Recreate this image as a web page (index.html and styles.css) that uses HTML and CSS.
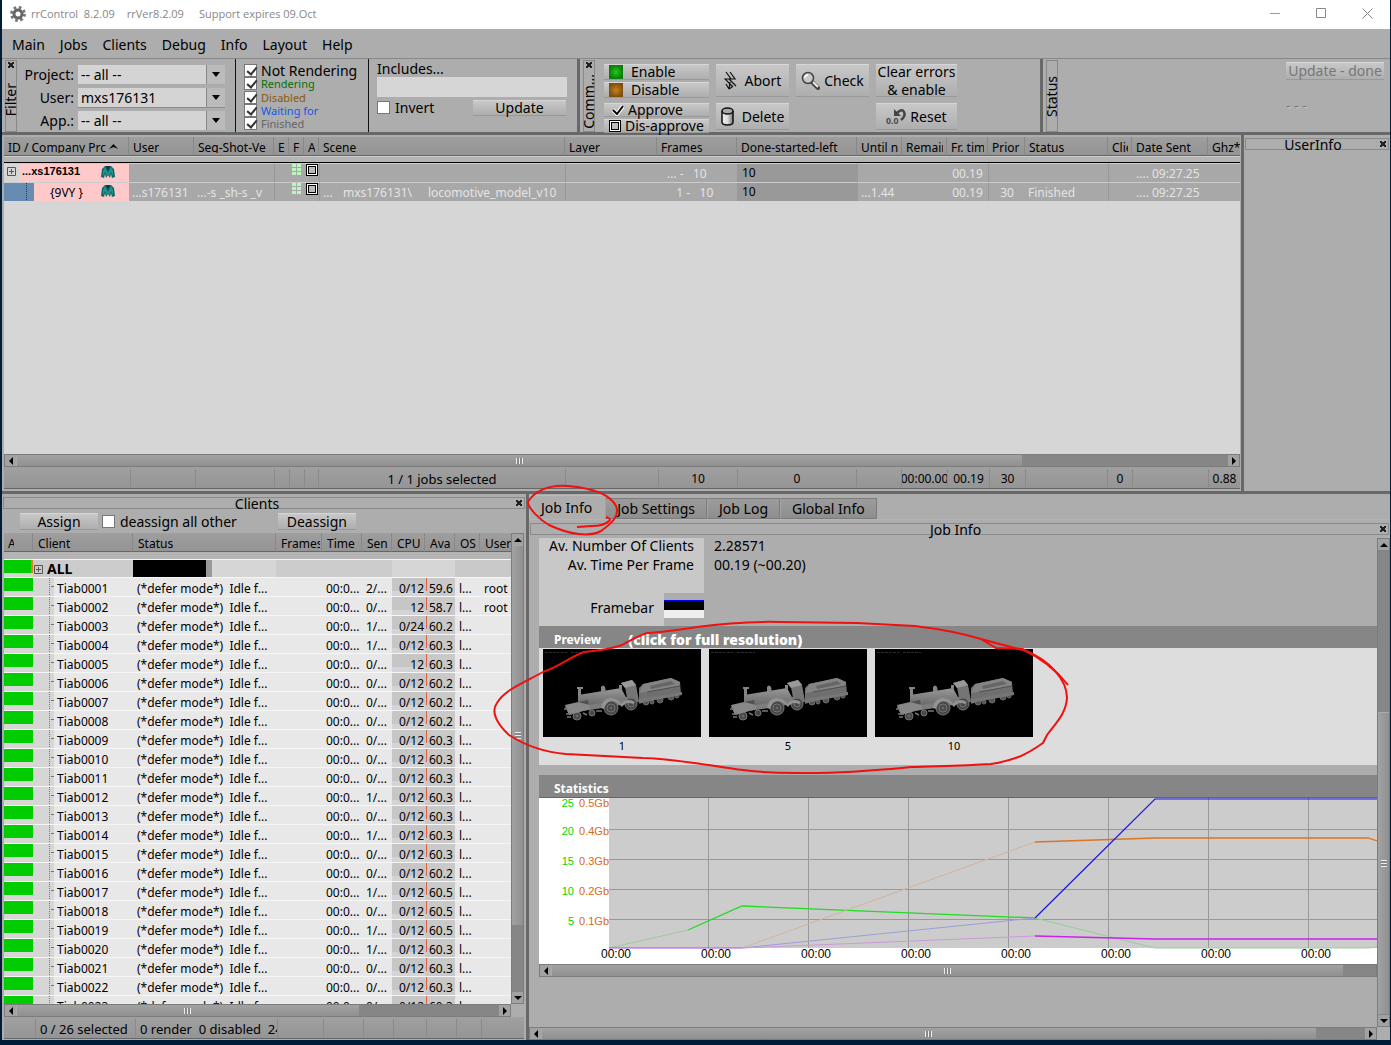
FILE: index.html
```html
<!DOCTYPE html>
<html lang="en">
<head>
<meta charset="utf-8">
<title>rrControl 8.2.09</title>
<link rel="stylesheet" href="styles.css">
</head>
<body>
<svg class="defs" aria-hidden="true">
  <defs>
    <radialGradient id="led-g"><stop offset="0" stop-color="#22cc11"/><stop offset="1" stop-color="#0c7a0c"/></radialGradient>
    <radialGradient id="led-o"><stop offset="0" stop-color="#c88018"/><stop offset="1" stop-color="#7d5010"/></radialGradient>
    <linearGradient id="metal" x1="0" y1="0" x2="0" y2="1"><stop offset="0" stop-color="#999"/><stop offset="1" stop-color="#6a6a6a"/></linearGradient>
    <linearGradient id="can"><stop offset="0" stop-color="#eee"/><stop offset=".5" stop-color="#ddd"/><stop offset="1" stop-color="#777"/></linearGradient>
    <symbol id="maya" viewBox="0 0 14 12">
      <path d="M4 0H10L13 3L14 11L11 12L10 8L9 12L7 9L5 12L4 8L3 12L0 11L1 3Z" fill="#0e6868"/>
      <path d="M4 1L7 7L10 1L12 5L12 10L10 6L8 10L7 8L6 10L4 6L2 10L2 5Z" fill="#23918f"/>
      <path d="M5 0H9L7 5Z" fill="#063c40"/>
    </symbol>
    <symbol id="cells" viewBox="0 0 9 11">
      <path d="M0 0h4v3H0zM5 0h4v3H5zM0 4h4v3H0zM5 4h4v3H5zM0 8h4v3H0zM5 8h4v3H5z" fill="#bdf5bd"/>
    </symbol>
    <symbol id="box" viewBox="0 0 12 12">
      <rect width="12" height="12" fill="#000"/><rect x="1" y="1" width="10" height="10" fill="#fff"/>
      <rect x="2" y="2" width="8" height="8" fill="#000"/><rect x="3" y="3" width="6" height="6" fill="#bbb"/>
    </symbol>
    <symbol id="plus" viewBox="0 0 9 9">
      <path d="M.5 .5h8v8h-8zM2 4.500h5M4.500 2v5" fill="none" stroke="#555"/>
    </symbol>
    <symbol id="loco" viewBox="0 0 158 88">
      <rect width="158" height="88" fill="#000"/>
      <path d="M2 3.500h14M18 3.500h6M28 3.500h18" stroke="#2c2c2c" stroke-dasharray="3 1"/>
      <g fill="#555" stroke="#6c6c6c"><circle cx="103" cy="53" r="3"/><circle cx="109" cy="53" r="2"/><circle cx="117" cy="51" r="3"/><circle cx="128" cy="48" r="3"/><circle cx="134" cy="47" r="2"/></g>
      <path d="M96 39L100 35L128 29L137 33L138 45L96 52Z" fill="#6f6f6f"/>
      <path d="M100 35L128 29L137 33L136 37L103 43L96 44Z" fill="#848484"/>
      <path d="M107 37L128 32L132 35L108 40Z" fill="#666"/>
      <path d="M96 50L139 43L139 46L96 54Z" fill="#777"/>
      <path d="M104 43L137 37" stroke="#505050"/>
      <path d="M22 58L36 54L92 47L96 53L60 59L40 62L26 65Z" fill="#7c7c7c"/>
      <path d="M35 46L60 42L78 39L84 50L46 56L35 53Z" fill="url(#metal)"/>
      <path d="M36 53L45 51L46 57L36 58Z" fill="#505050"/>
      <path d="M34 38h6v2h-2v7h-3v-7h-1zM58 38q2-3 4 0l1 5h-5zM76 36h3v5h-3z" fill="#868686"/>
      <path d="M78 34L89 31L93 36L96 52L85 54L82 38Z" fill="#757575"/>
      <path d="M78 34L89 31L93 36L82 39Z" fill="#999"/>
      <g fill="#484848" stroke="#747474"><circle cx="34" cy="67" r="4"/><circle cx="34" cy="67" r="1"/><circle cx="49" cy="64" r="3"/><circle cx="68" cy="59" r="7"/><circle cx="68" cy="59" r="4"/><circle cx="68" cy="59" r="1"/><circle cx="88" cy="55" r="6"/><circle cx="88" cy="55" r="3"/></g>
      <path d="M58 59q1-9 9-10q8 0 11 6q6-7 14-2l-2 2q-7-3-11 3q-6-7-11-6t-7 8z" fill="#939393"/>
      <path d="M22 56L35 53L47 56L47 60L26 66Z" fill="#888"/>
      <path d="M21 60h4M23 65h6M24 68h4M40 64l4 2M53 62l6 0M96 54l4-1" stroke="#777" stroke-width="1.500"/>
    </symbol>
  </defs>
</svg>

<div class="window">
  <header class="titlebar">
    <svg class="gear" width="16" height="16" viewBox="0 0 16 16"><circle cx="8" cy="8" r="6.500" fill="none" stroke="#777" stroke-width="3" stroke-dasharray="2.600 2.500"/><circle cx="8" cy="8" r="4" fill="#fff" stroke="#666" stroke-width="3"/></svg>
    <span>rrControl&nbsp; 8.2.09</span><span>rrVer8.2.09</span><span class="expires">Support expires 09.Oct</span>
    <div class="winbtns">
      <button aria-label="Minimize"><svg width="11" height="11"><path d="M0 5.500h10" stroke="#999"/></svg></button>
      <button aria-label="Maximize"><svg width="11" height="11"><path d="M.5 .5h9v9h-9z" stroke="#888" fill="none"/></svg></button>
      <button aria-label="Close"><svg width="11" height="11"><path d="M.5 .5l10 10M10.500 .5l-10 10" stroke="#888"/></svg></button>
    </div>
  </header>
  <nav class="menubar">
    <a href="#">Main</a><a href="#">Jobs</a><a href="#">Clients</a><a href="#">Debug</a><a href="#">Info</a><a href="#">Layout</a><a href="#">Help</a>
  </nav>

  <div class="toolbar">
    <section class="tool filter">
      <div class="vtitle"><button class="x" aria-label="Close Filter"></button><span>Filter</span></div>
      <div class="selects">
        <label for="project">Project:</label><span class="sel"><select id="project"><option>-- all --</option></select></span>
        <label for="user">User:</label><span class="sel hot"><select id="user"><option>mxs176131</option></select></span>
        <label for="app">App.:</label><span class="sel"><select id="app"><option>-- all --</option></select></span>
      </div>
    </section>
    <section class="tool states">
      <label class="first"><input type="checkbox" checked><span>Not Rendering</span></label>
      <label class="s-run"><input type="checkbox" checked><span>Rendering</span></label>
      <label class="s-dis"><input type="checkbox" checked><span>Disabled</span></label>
      <label class="s-wait"><input type="checkbox" checked><span>Waiting for</span></label>
      <label class="s-fin"><input type="checkbox" checked><span>Finished</span></label>
    </section>
    <section class="tool includes">
      <label for="inc">Includes...</label>
      <input id="inc" type="text">
      <div class="incrow"><label><input type="checkbox"><span>Invert</span></label><button class="btn">Update</button></div>
    </section>
    <section class="tool commands">
      <div class="vtitle"><button class="x" aria-label="Close Commands"></button><span>Comm...</span></div>
      <div class="cmd-left">
        <button class="btn"><svg width="14" height="14"><rect width="14" height="14" fill="url(#led-g)"/></svg><span>Enable</span></button>
        <button class="btn"><svg width="14" height="14"><rect width="14" height="14" fill="url(#led-o)"/></svg><span>Disable</span></button>
        <button class="btn low ok"><svg width="12" height="12"><path d="M1 6l4 4 6-8" fill="none" stroke="#fff" stroke-width="4"/><path d="M1 6l4 4 6-8" fill="none" stroke="#000" stroke-width="2"/></svg><span>Approve</span></button>
        <button class="btn low last"><svg width="12" height="12"><use href="#box"/></svg><span>Dis-approve</span></button>
      </div>
      <div class="cmd-grid">
        <button class="btn"><svg width="13" height="19" viewBox="0 0 13 19"><path d="M2 1l5 7H1l8 8M6 1l5 7H5l7 7M5 18l1-7M5 18l-3-5M5 18l3-2" fill="none" stroke="#111" stroke-width="1.200"/></svg><span>Abort</span></button>
        <button class="btn tight"><svg width="19" height="19" viewBox="0 0 19 19"><path d="M11 11l6 6" stroke="#444" stroke-width="4" stroke-linecap="round"/><path d="M12 11l5 5" stroke="#eee" stroke-width="2"/><circle cx="7" cy="7" r="5.500" fill="#c8c8c8" stroke="#444" stroke-width="1.500"/><path d="M4 7q0-3 3-3" stroke="#fff" stroke-width="1.500" fill="none"/></svg><span>Check</span></button>
        <button class="btn two">Clear errors<br>&amp; enable</button>
        <button class="btn"><svg width="13" height="19" viewBox="0 0 13 19"><path d="M1 4v11q0 3 5.500 3t5.500-3V4" fill="url(#can)" stroke="#111" stroke-width="1.500"/><ellipse cx="6.500" cy="4" rx="5.500" ry="3" fill="#aaa" stroke="#111" stroke-width="1.500"/></svg><span>Delete</span></button>
        <span></span>
        <button class="btn tight"><svg width="20" height="17" viewBox="0 0 20 17"><path d="M11 5q5-5 7-1t-3 8" fill="none" stroke="#444" stroke-width="2.500"/><path d="M8 1v7h7z" fill="#444"/><text x="0" y="16" class="zero">0.0</text></svg><span>Reset</span></button>
      </div>
    </section>
    <section class="tool status">
      <div class="vtitle nox"><span>Status</span></div>
      <div class="statusbox"><button class="btn" disabled>Update - done</button><span>- - -</span></div>
    </section>
  </div>

  <div class="upper">
    <section class="jobs">
      <div class="jobview">
      <table class="grid jobtable">
        <colgroup><col class="w125"><col class="w65"><col class="w80"><col class="w15"><col class="w15"><col class="w15"><col class="w246"><col class="w92"><col class="w80"><col class="w120"><col class="w45"><col class="w45"><col class="w41"><col class="w37"><col class="w83"><col class="w24"><col class="w76"><col></colgroup>
        <thead><tr><th><span>ID / Company Prc <svg width="9" height="5" viewBox="0 0 9 5"><path d="M0 5l4.500-5L9 5l-4.500-2z"/></svg></span></th><th><span>User</span></th><th><span>Seq-Shot-Ve</span></th><th><span>E</span></th><th><span>F</span></th><th><span>A</span></th><th><span>Scene</span></th><th><span>Layer</span></th><th><span>Frames</span></th><th><span>Done-started-left</span></th><th><span>Until n</span></th><th><span>Remain</span></th><th><span>Fr. time</span></th><th><span>Prior</span></th><th><span>Status</span></th><th><span>Clie</span></th><th><span>Date Sent</span></th><th><span>Ghz*</span></th></tr></thead>
        <tbody>
          <tr class="gap"><td colspan="18"></td></tr>
          <tr><td class="tree t1"><div><i><svg width="9" height="9"><use href="#plus"/></svg></i><b>...xs176131</b><svg class="maya" width="14" height="12"><use href="#maya"/></svg></div></td><td></td><td></td><td class="vl"></td><td class="ic"><svg width="9" height="11"><use href="#cells"/></svg></td><td class="ic"><svg width="12" height="12"><use href="#box"/></svg></td><td class="vl"></td><td class="vl"></td><td class="mid">... -&nbsp;&nbsp; 10</td><td class="done">10</td><td class="vl"></td><td></td><td class="c">00.19</td><td class="vl"></td><td></td><td class="vl"></td><td class="date">.... 09:27.25</td><td></td></tr>
          <tr><td class="tree t2"><div><i></i><span>{9VY }</span><svg class="maya" width="14" height="12"><use href="#maya"/></svg></div></td><td>...s176131</td><td>...-s _sh-s _v</td><td class="vl"></td><td class="ic"><svg width="9" height="11"><use href="#cells"/></svg></td><td class="ic"><svg width="12" height="12"><use href="#box"/></svg></td><td class="vl"><div class="scene"><span>...</span><span>mxs176131\</span><span>locomotive_model_v10</span></div></td><td class="vl"></td><td class="mid">&nbsp;&nbsp; 1 -&nbsp;&nbsp; 10</td><td class="done">10</td><td class="vl">...1.44</td><td></td><td class="c">00.19</td><td class="vl c">30</td><td>Finished</td><td class="vl"></td><td class="date">.... 09:27.25</td><td></td></tr>
        </tbody>
      </table>
      </div>
      <div class="sb h jobsb"><button aria-label="Left"></button><div class="track"><div class="thumb"></div></div><button class="fwd" aria-label="Right"></button></div>
      <div class="foot jobfoot"><span></span><span></span><span></span><span></span><span></span><span></span><span>1 / 1 jobs selected</span><span></span><span>10</span><span>0</span><span></span><span>00:00.00</span><span>00.19</span><span>30</span><span></span><span>0</span><span></span><span>0.88</span></div>
    </section>
    <section class="userinfo"><div class="dock"><h2>UserInfo</h2><button class="x" aria-label="Close UserInfo"></button></div></section>
  </div>

  <div class="lower">
    <section class="clients">
      <div class="dock"><h2>Clients</h2><button class="x" aria-label="Close Clients"></button></div>
      <div class="assign"><button class="btn">Assign</button><label><input type="checkbox"><span>deassign all other</span></label><button class="btn de">Deassign</button></div>
      <div class="cl-body">
        <div class="cl-main">
          <div class="cl-view">
          <table class="grid cltable">
            <colgroup><col class="w29"><col class="w100"><col class="w143"><col class="w46"><col class="w40"><col class="w30"><col class="w33"><col class="w30"><col class="w25"><col></colgroup>
            <thead><tr><th><span>A</span></th><th><span>Client</span></th><th><span>Status</span></th><th><span>Frames</span></th><th><span>Time</span></th><th><span>Sen</span></th><th><span>CPU</span></th><th><span>Ava</span></th><th><span>OS</span></th><th><span>User</span></th></tr></thead>
            <tbody>
            <tr class="gap"><td colspan="10"></td></tr>
            <tr class="all"><td class="on"></td><td class="name"><svg width="9" height="9"><use href="#plus"/></svg><b>ALL</b></td><td class="bar"></td><td></td><td></td><td></td><td></td><td></td><td></td><td></td></tr>
            <tr><td class="on"></td><td class="name">Tiab0001</td><td>(*defer mode*)  Idle f...</td><td></td><td>00:0...</td><td>2/...</td><td class="cpu">0/12</td><td class="ava">59.6</td><td>l...</td><td>root</td></tr>
            <tr><td class="on"></td><td class="name">Tiab0002</td><td>(*defer mode*)  Idle f...</td><td></td><td>00:0...</td><td>0/...</td><td class="cpu">12</td><td class="ava">58.7</td><td>l...</td><td>root</td></tr>
            <tr><td class="on"></td><td class="name">Tiab0003</td><td>(*defer mode*)  Idle f...</td><td></td><td>00:0...</td><td>1/...</td><td class="cpu">0/24</td><td class="ava">60.2</td><td>l...</td><td></td></tr>
            <tr><td class="on"></td><td class="name">Tiab0004</td><td>(*defer mode*)  Idle f...</td><td></td><td>00:0...</td><td>1/...</td><td class="cpu">0/12</td><td class="ava">60.3</td><td>l...</td><td></td></tr>
            <tr><td class="on"></td><td class="name">Tiab0005</td><td>(*defer mode*)  Idle f...</td><td></td><td>00:0...</td><td>0/...</td><td class="cpu">12</td><td class="ava">60.3</td><td>l...</td><td></td></tr>
            <tr><td class="on"></td><td class="name">Tiab0006</td><td>(*defer mode*)  Idle f...</td><td></td><td>00:0...</td><td>0/...</td><td class="cpu">0/12</td><td class="ava">60.2</td><td>l...</td><td></td></tr>
            <tr><td class="on"></td><td class="name">Tiab0007</td><td>(*defer mode*)  Idle f...</td><td></td><td>00:0...</td><td>0/...</td><td class="cpu">0/12</td><td class="ava">60.2</td><td>l...</td><td></td></tr>
            <tr><td class="on"></td><td class="name">Tiab0008</td><td>(*defer mode*)  Idle f...</td><td></td><td>00:0...</td><td>0/...</td><td class="cpu">0/12</td><td class="ava">60.2</td><td>l...</td><td></td></tr>
            <tr><td class="on"></td><td class="name">Tiab0009</td><td>(*defer mode*)  Idle f...</td><td></td><td>00:0...</td><td>0/...</td><td class="cpu">0/12</td><td class="ava">60.3</td><td>l...</td><td></td></tr>
            <tr><td class="on"></td><td class="name">Tiab0010</td><td>(*defer mode*)  Idle f...</td><td></td><td>00:0...</td><td>0/...</td><td class="cpu">0/12</td><td class="ava">60.3</td><td>l...</td><td></td></tr>
            <tr><td class="on"></td><td class="name">Tiab0011</td><td>(*defer mode*)  Idle f...</td><td></td><td>00:0...</td><td>0/...</td><td class="cpu">0/12</td><td class="ava">60.3</td><td>l...</td><td></td></tr>
            <tr><td class="on"></td><td class="name">Tiab0012</td><td>(*defer mode*)  Idle f...</td><td></td><td>00:0...</td><td>1/...</td><td class="cpu">0/12</td><td class="ava">60.3</td><td>l...</td><td></td></tr>
            <tr><td class="on"></td><td class="name">Tiab0013</td><td>(*defer mode*)  Idle f...</td><td></td><td>00:0...</td><td>0/...</td><td class="cpu">0/12</td><td class="ava">60.3</td><td>l...</td><td></td></tr>
            <tr><td class="on"></td><td class="name">Tiab0014</td><td>(*defer mode*)  Idle f...</td><td></td><td>00:0...</td><td>1/...</td><td class="cpu">0/12</td><td class="ava">60.3</td><td>l...</td><td></td></tr>
            <tr><td class="on"></td><td class="name">Tiab0015</td><td>(*defer mode*)  Idle f...</td><td></td><td>00:0...</td><td>0/...</td><td class="cpu">0/12</td><td class="ava">60.3</td><td>l...</td><td></td></tr>
            <tr><td class="on"></td><td class="name">Tiab0016</td><td>(*defer mode*)  Idle f...</td><td></td><td>00:0...</td><td>0/...</td><td class="cpu">0/12</td><td class="ava">60.2</td><td>l...</td><td></td></tr>
            <tr><td class="on"></td><td class="name">Tiab0017</td><td>(*defer mode*)  Idle f...</td><td></td><td>00:0...</td><td>1/...</td><td class="cpu">0/12</td><td class="ava">60.5</td><td>l...</td><td></td></tr>
            <tr><td class="on"></td><td class="name">Tiab0018</td><td>(*defer mode*)  Idle f...</td><td></td><td>00:0...</td><td>0/...</td><td class="cpu">0/12</td><td class="ava">60.5</td><td>l...</td><td></td></tr>
            <tr><td class="on"></td><td class="name">Tiab0019</td><td>(*defer mode*)  Idle f...</td><td></td><td>00:0...</td><td>1/...</td><td class="cpu">0/12</td><td class="ava">60.5</td><td>l...</td><td></td></tr>
            <tr><td class="on"></td><td class="name">Tiab0020</td><td>(*defer mode*)  Idle f...</td><td></td><td>00:0...</td><td>1/...</td><td class="cpu">0/12</td><td class="ava">60.3</td><td>l...</td><td></td></tr>
            <tr><td class="on"></td><td class="name">Tiab0021</td><td>(*defer mode*)  Idle f...</td><td></td><td>00:0...</td><td>0/...</td><td class="cpu">0/12</td><td class="ava">60.3</td><td>l...</td><td></td></tr>
            <tr><td class="on"></td><td class="name">Tiab0022</td><td>(*defer mode*)  Idle f...</td><td></td><td>00:0...</td><td>0/...</td><td class="cpu">0/12</td><td class="ava">60.3</td><td>l...</td><td></td></tr>
            <tr><td class="on"></td><td class="name">Tiab0023</td><td>(*defer mode*)  Idle f...</td><td></td><td>00:0...</td><td>0/...</td><td class="cpu">0/12</td><td class="ava">60.3</td><td>l...</td><td></td></tr>
            </tbody>
          </table>
          </div>
          <div class="sb h clsb"><button aria-label="Left"></button><div class="track"><div class="thumb"></div></div><button class="fwd" aria-label="Right"></button></div>
        </div>
        <div class="sb v clsbv"><button aria-label="Up"></button><div class="track"><div class="thumb"></div></div><button class="fwd" aria-label="Down"></button></div>
      </div>
      <div class="foot clfoot"><span></span><span>0 / 26 selected</span><span>0 render&nbsp; 0 disabled&nbsp; 24</span><span></span><span></span><span></span><span></span><span></span><span></span><span></span></div>
    </section>

    <section class="info">
      <div class="tabs" role="tablist"><button role="tab" class="active">Job Info</button><button role="tab">Job Settings</button><button role="tab">Job Log</button><button role="tab">Global Info</button></div>
      <div class="dock"><h2>Job Info</h2><button class="x" aria-label="Close Job Info"></button></div>
      <div class="info-body">
        <div class="info-main">
          <div class="info-view">
            <dl class="facts">
              <dt>Av. Number Of Clients</dt><dd>2.28571</dd>
              <dt class="tall">Av. Time Per Frame</dt><dd>00.19 (~00.20)</dd>
            </dl>
            <div class="framebar"><span>Framebar</span><i></i></div>
            <h3><span>Preview</span><strong>(click for full resolution)</strong></h3>
            <div class="previews">
              <a href="#"><svg width="158" height="88"><use href="#loco"/></svg><span>1</span></a>
              <a href="#"><svg width="158" height="88"><use href="#loco"/></svg><span>5</span></a>
              <a href="#"><svg width="158" height="88"><use href="#loco"/></svg><span>10</span></a>
            </div>
            <h3 class="stat">Statistics</h3>
            <div class="chart">
              <svg width="838" height="166" viewBox="0 0 838 166">
                <rect x="70" width="768" height="150" fill="#ccc"/>
                <path d="M70 31.500h768M70 61.500h768M70 91.500h768M70 121.500h768M169.500 0v150M269.500 0v150M369.500 0v150M469.500 0v150M569.500 0v150M669.500 0v150M769.500 0v150" stroke="#999" fill="none"/>
                <g fill="none">
                  <path d="M70 150L149 132M496 120L616 150H829L838 149" stroke="#95d095"/>
                  <path d="M149 132L203 108L496 120" stroke="#1fdc1f" stroke-width="1.300"/>
                  <path d="M203 150L496 44" stroke="#d3b49d"/>
                  <path d="M496 44L616 40H829L838 43" stroke="#dc7423" stroke-width="1.300"/>
                  <path d="M203 150L496 120" stroke="#9d9dda"/>
                  <path d="M496 120L616 1H838" stroke="#1414ee" stroke-width="1.200"/>
                  <path d="M203 150L496 138" stroke="#cc9ad8"/>
                  <path d="M70 150H203" stroke="#b050dc"/>
                  <path d="M496 138L616 141H838" stroke="#cb20ee" stroke-width="1.500"/>
                </g>
                <g class="y1"><text x="35" y="9">25</text><text x="35" y="37">20</text><text x="35" y="67">15</text><text x="35" y="97">10</text><text x="35" y="127">5</text></g>
                <g class="y2"><text x="70" y="9">0.5Gb</text><text x="70" y="37">0.4Gb</text><text x="70" y="67">0.3Gb</text><text x="70" y="97">0.2Gb</text><text x="70" y="127">0.1Gb</text></g>
                <g class="xt"><text x="62" y="160">00:00</text><text x="162" y="160">00:00</text><text x="262" y="160">00:00</text><text x="362" y="160">00:00</text><text x="462" y="160">00:00</text><text x="562" y="160">00:00</text><text x="662" y="160">00:00</text><text x="762" y="160">00:00</text></g>
              </svg>
            </div>
            <div class="sb h statsb"><button aria-label="Left"></button><div class="track"><div class="thumb"></div></div></div>
          </div>
          <div class="sb h infosb"><button aria-label="Left"></button><div class="track"><div class="thumb"></div></div><button class="fwd" aria-label="Right"></button></div>
        </div>
        <div class="sb v infosbv"><button aria-label="Up"></button><div class="track"><div class="thumb"></div></div><button class="fwd" aria-label="Down"></button></div>
      </div>
    </section>
  </div>
</div>

<svg class="ink" width="590" height="310" viewBox="490 480 590 310" aria-hidden="true">
  <path d="M606 517 Q612 519 609 521 Q604 526 592 526 L577 527"/>
  <path d="M528 502 C534 491 550 484 568 486 C590 488 610 494 616 506 C620 516 612 523 601 531 C590 537 570 535 549 525 C540 520 528 508 528 502"/>
  <path d="M981 639 L996 648 L1022 649 Q1050 662 1068 685"/>
  <path d="M1022 649 C1050 660 1067 680 1067 698 C1066 714 1055 724 1047 735 L1043 743 C1030 752 1018 760 991 764 C960 766 935 766 911 767 C880 770 840 774 796 773 C750 773 730 768 708 765 Q660 758 643 758 L566 754 C540 752 520 742 509 735 C498 725 490 712 497 703 C504 690 525 682 543 672 C560 666 570 657 584 652 Q608 650 622 645 Q638 636 647 633 Q665 632 697 627 Q740 621 781 622 L857 623 L915 626 Q955 631 981 639 L1026 651"/>
</svg>
</body>
</html>
```
FILE: styles.css
```css
* { box-sizing: border-box; }
body {
  margin: 0;
  font: 14px/16px "Noto Sans", "Open Sans", sans-serif;
  color: #000;
  background: #001c38;
  overflow: hidden;
}
button, input, select { font: inherit; color: inherit; margin: 0; padding: 0; border: 0; border-radius: 0; background: none; }
h2, h3, dl, dd { margin: 0; font-weight: normal; font-size: 14px; }
a { color: inherit; text-decoration: none; }
svg { flex: none; }
.defs { position: absolute; width: 0; height: 0; }

.window {
  display: flex;
  flex-direction: column;
  height: calc(100vh - 5px);
  margin: 0 1px 5px 2px;
  background: #adadad;
}

/* title and menu */
.titlebar { display: flex; align-items: center; height: 29px; flex: none; padding: 0 0 2px 8px; background: #fff; color: #888; font: 11px/26px "Open Sans", sans-serif; }
.titlebar span { margin-right: 12px; }
.gear { margin-right: 5px; }
.titlebar .expires { margin-left: 3px; }
.winbtns { display: flex; margin-left: auto; }
.winbtns button { width: 46px; height: 27px; display: grid; place-items: center; }
.menubar { display: flex; gap: 15px; height: 30px; flex: none; padding: 8px 10px 0; border-bottom: 1px solid #888; }

/* toolbar */
.toolbar { display: flex; height: 76px; flex: none; border-bottom: 3px solid #686868; }
.tool { display: flex; flex: none; }
.btn {
  display: flex; align-items: center; justify-content: center; gap: 8px;
  background: linear-gradient(#c8c8c8, #aeaeae);
  border-top: 1px solid #d6d6d6; border-bottom: 1px solid #999;
  white-space: nowrap;
}
.vtitle { width: 12px; height: 72px; margin-top: 1px; border: 1px solid #888; display: flex; flex-direction: column; justify-content: space-between; flex: none; }
.vtitle span { writing-mode: vertical-rl; transform: rotate(180deg); line-height: 10px; padding-top: 15px; }
.vtitle .x { margin: 1px auto; }
.vtitle.nox span { padding-top: 14px; }
.vtitle.nox { justify-content: flex-end; }
.commands .vtitle span { padding-top: 2px; }
.x { width: 6px; height: 6px; flex: none; background:
  linear-gradient(45deg, transparent 40%, #222 40% 60%, transparent 60%),
  linear-gradient(-45deg, transparent 40%, #222 40% 60%, transparent 60%); }
.filter { width: 234px; padding-left: 3px; border-right: 1px solid #111; }
.selects { display: grid; grid-template-columns: 57px 147px; grid-auto-rows: 20px; gap: 3px 4px; padding-top: 6px; line-height: 20px; }
.selects label { text-align: right; }
.sel { position: relative; }
.sel select { appearance: none; width: 147px; height: 20px; padding-left: 3px; background: linear-gradient(90deg, #d4d4d4 128px, #888 128px 129px, #bbb 129px); display: block; border-bottom: 1px solid #aaa; }
.sel.hot select { border-bottom-color: #6f93b3; }
.sel::after { content: ""; position: absolute; right: 5px; top: 7px; border: 4px solid transparent; border-top: 5px solid #000; border-bottom: 0; pointer-events: none; }
input[type=checkbox] { appearance: none; width: 13px; height: 13px; border: 1px solid #777; background: #fff; flex: none; position: relative; }
input[type=checkbox]:checked::after { content: ""; position: absolute; left: 4px; top: 0; width: 4px; height: 8px; border: solid #333; border-width: 0 2px 2px 0; transform: rotate(40deg); }
.states { width: 133px; flex-direction: column; justify-content: space-between; padding: 5px 0 2px 8px; border-right: 1px solid #111; }
.states label { display: flex; align-items: center; gap: 4px; height: 13px; font-size: 11px; line-height: 13px; }
.states .first { font-size: 14px; }
.s-run { color: #087008; } .s-dis { color: #87590f; } .s-wait { color: #1458e8; } .s-fin { color: #666; }
.includes { width: 211px; flex-direction: column; padding: 2px 11px 0 8px; border-right: 3px solid #686868; }
.includes > input { height: 20px; background: #d6d6d6; width: 190px; }
.incrow { display: flex; justify-content: space-between; align-items: center; height: 21px; }
.incrow label, .assign label { display: flex; align-items: center; gap: 5px; }
.incrow .btn { width: 93px; height: 16px; }
.commands { width: 463px; padding-left: 3px; border-right: 3px solid #686868; }
.cmd-left { display: flex; flex-direction: column; gap: 2px; margin: 5px 7px 0 9px; }
.cmd-left .btn { width: 105px; height: 16px; justify-content: flex-start; padding-left: 5px; }
.cmd-left .low { height: 14px; margin-top: 3px; gap: 4px; }
.cmd-left .ok { padding-left: 8px; }
.cmd-left .last { margin-top: 0; }
.cmd-grid { display: grid; grid-template: 33px 27px / 73px 73px 81px; gap: 6px 7px; padding-top: 5px; }
.cmd-grid .btn { line-height: 18px; }
.cmd-grid .tight { gap: 4px; }
.zero { font: bold 9px "Liberation Sans", sans-serif; fill: #444; }
.status { flex: 1; padding-left: 3px; justify-content: space-between; }
.statusbox { width: 104px; padding-top: 3px; color: #777; text-shadow: 1px 1px #ccc; }
.statusbox .btn { width: 98px; height: 18px; }
.statusbox > span { display: block; margin-top: 18px; }

/* docks and scrollbars */
.dock { display: flex; align-items: center; height: 12px; margin: 0 1px; border: 1px solid #8a8a8a; }
.dock h2 { flex: 1; text-align: center; line-height: 12px; padding-top: 2px; }
.dock .x { margin-right: 2px; }
.sb { display: flex; flex: none; background: #868686; border: 1px solid #7c7c7c; }
.sb.h { height: 13px; } .sb.v { width: 13px; flex-direction: column; }
.sb button { flex: none; width: 11px; height: 11px; background: #a2a2a2; display: grid; place-items: center; }
.sb button::before { content: ""; border: 4px solid transparent; border-left-width: 0; border-right: 4px solid #000; }
.sb button.fwd::before { transform: rotate(180deg); }
.sb.v button::before { transform: rotate(90deg); }
.sb.v button.fwd::before { transform: rotate(-90deg); }
.track { flex: 1; min-height: 0; }
.sb.v .track { display: flex; flex-direction: column; }
.thumb { display: grid; place-items: center; background: linear-gradient(#a2a2a2, #909090); border-left: 1px solid #aaa; height: 100%; }
.thumb::before { content: ""; width: 7px; height: 6px; background: repeating-linear-gradient(90deg, #eee 0 1px, #888 1px 3px); }
.v .thumb { background: linear-gradient(90deg, #a2a2a2, #909090); border: 0; border-top: 1px solid #aaa; }
.v .thumb::before { width: 6px; height: 7px; background: repeating-linear-gradient(#eee 0 1px, #888 1px 3px); }
.jobsb .thumb { width: 83%; }
.clsb .thumb { width: 71%; }
.clsbv .thumb { height: 85%; }
.statsb .thumb { width: 96%; }
.infosb .thumb { width: 94%; }
.infosbv .track { justify-content: flex-end; padding-bottom: 1px; }
.infosbv .thumb { height: 65%; }

/* tables */
.grid { width: 100%; table-layout: fixed; border-collapse: separate; border-spacing: 0; font-size: 12px; line-height: 16px; }
.grid th { height: 19px; padding: 0 3px 0 4px; text-align: left; font-weight: normal; background: linear-gradient(#9e9e9e, #949494); border-bottom: 1px solid #666; border-right: 1px solid #888; }
.grid th:last-child { border-right: 0; padding-right: 0; }
.grid th span { display: block; height: 14px; line-height: 17px; overflow: hidden; white-space: nowrap; }
.grid td { padding: 0; white-space: pre; overflow: hidden; }
.w125 { width: 125px; } .w65 { width: 65px; } .w80 { width: 80px; } .w15 { width: 15px; } .w246 { width: 246px; } .w92 { width: 92px; } .w120 { width: 120px; } .w45 { width: 45px; } .w41 { width: 41px; } .w37 { width: 37px; } .w83 { width: 83px; } .w24 { width: 24px; } .w76 { width: 76px; }
.w29 { width: 29px; } .w100 { width: 100px; } .w143 { width: 143px; } .w46 { width: 46px; } .w40 { width: 40px; } .w30 { width: 30px; } .w33 { width: 33px; } .w25 { width: 25px; }

.upper { display: flex; height: 359px; flex: none; border-bottom: 3px solid #686868; }
.jobs { flex: 1; min-width: 0; padding: 2px 1px 2px 2px; display: flex; flex-direction: column; }
.jobview { flex: 1; background: #d6d6d6; overflow: hidden; }
.jobtable .gap td { height: 7px; background: #b4b4b4; border-bottom: 1px solid #000; }
.jobtable td { height: 19px; padding-left: 3px; padding-top: 2px; color: #e4e4e4; background: #a8a8a8; border-top: 1px solid #ccc; }
.jobtable .vl { border-left: 1px solid #999; }
.jobtable .ic { padding: 0; vertical-align: top; text-align: center; }
.jobtable .ic svg { display: block; margin: 0 auto; }
.jobtable .mid { padding-left: 10px; }
.jobtable .c { text-align: center; padding-left: 0; }
.jobtable .date { padding-left: 4px; }
.jobtable td.done { background: #999; color: #000; padding-left: 5px; padding-top: 0; }
.jobtable td.tree { color: #000; background: #ffc9c9; padding: 0; }
.tree div { display: flex; align-items: center; height: 18px; }
.tree i { display: grid; place-items: center; background: #d6d6d6; width: 15px; height: 18px; margin-right: 3px; }
.t1 i { padding-bottom: 3px; }
.tree b { font: bold 11px/14px "Liberation Sans", sans-serif; width: 79px; height: 18px; }
.t2 i { width: 30px; margin-right: 16px; background: repeating-linear-gradient(#333 0 1px, transparent 1px 2px) 22px 0 / 1px 100% no-repeat, #668cb2; }
.t2 span { width: 51px; padding-top: 1px; }
.tree .maya { margin-bottom: 3px; }
.scene { display: flex; gap: 16px; }
.scene span:first-child { width: 4px; }
.jobtable th:first-child svg { margin-bottom: 3px; }
.foot { display: grid; height: 22px; flex: none; background: linear-gradient(#a0a0a0, #959595); border-bottom: 1px solid #666; font-size: 13px; }
.foot span { overflow: hidden; white-space: nowrap; border-right: 1px solid #8a8a8a; margin: 2px 0; height: 18px; line-height: 20px; display: flex; justify-content: center; }
.foot span:last-child { border: 0; }
.jobfoot { font-size: 12px; grid-template-columns: 127px 65px 79px 15px 15px 14px 247px 93px 79px 119px 45px 46px 42px 36px 82px 25px 76px 1fr; }
.jobfoot span:nth-child(7) { font-size: 13px; }
.userinfo { flex: 0 0 149px; border-left: 3px solid #686868; padding-top: 3px; }

.lower { flex: 1; min-height: 0; display: flex; }
.clients { flex: 0 0 527px; border-right: 3px solid #686868; display: flex; flex-direction: column; padding: 3px 0 1px; }
.clients .dock h2 { padding-right: 6px; }
.assign { display: flex; align-items: center; height: 24px; margin-left: 18px; padding-top: 1px; }
.assign .btn { width: 78px; height: 17px; margin-right: 4px; }
.assign .de { margin-left: 41px; }
.cl-body { flex: 1; min-height: 0; display: flex; margin: 0 2px; }
.cl-main { flex: 1; min-width: 0; display: flex; flex-direction: column; }
.cl-view { flex: 1; min-height: 0; overflow: hidden; background: #e8e8e8; }
.clsbv { margin-bottom: 13px; }
.cltable th { padding-left: 5px; padding-right: 1px; }
.cltable .gap td { height: 7px; background: #b4b4b4; border: 0; }
.cltable td { height: 19px; padding: 3px 0 0 4px; line-height: 15px; background: #e8e8e8; border-top: 1px solid #f6f6f6; }
.cltable th:first-child { padding: 0 18px 0 4px; }
.cltable .on { background: linear-gradient(#00cc00 13px, #d6d6d6 13px); }
.cltable .name { padding-left: 24px; background:
  repeating-linear-gradient(#777 0 1px, transparent 1px 2px) 16px 0 / 1px 100% no-repeat,
  linear-gradient(#777, #777) 18px 8px / 3px 1px no-repeat,
  linear-gradient(90deg, #d6d6d6 21px, #e8e8e8 21px); }
.cltable .cpu { text-align: right; padding-right: 1px; background: linear-gradient(#c6c6c6 13px, #d4d4d4 13px); }
.cltable .ava { background: linear-gradient(#e0603c, #e0603c) 1px 0 / 1px 13px no-repeat, #c9c9c9; }
.cltable .all td { height: 18px; padding-top: 0; background: #ccc; }
.cltable .all td:nth-child(n+7) { background: #d6d6d6; }
.cltable .all td:nth-child(n+9) { background: #c9c9c9; }
.cltable .all td.on { background: linear-gradient(90deg, #00cc00 27px, #e08020 27px) 0 0 / 100% 13px no-repeat, #d6d6d6; }
.cltable .all td.name { padding-left: 1px; }
.all b { margin-left: 4px; font-size: 14px; }
.cltable .all .bar { padding: 0; background: linear-gradient(90deg, #000 73px, #999 73px 79px, #d6d6d6 79px); }
.clfoot { margin: 0 2px; grid-template-columns: 32px 100px 142px 46px 40px 30px 33px 30px 25px 1fr; }
.clfoot span { justify-content: flex-start; padding-left: 4px; }

/* job info */
.info { flex: 1; min-width: 0; display: flex; flex-direction: column; padding-top: 1px; }
.tabs { display: flex; align-items: flex-end; height: 25px; margin-bottom: 3px; border-bottom: 1px solid #b4b4b4; flex: none; }
.tabs button { height: 21px; padding: 0 11px; background: linear-gradient(#9c9c9c, #8e8e8e); border: 1px solid #7c7c7c; border-left-color: #a2a2a2; }
.tabs .active { height: 24px; background: #adadad; border-color: #bbb #adadad #adadad #bbb; padding: 2px 12px 0 11px; }
.info-body { flex: 1; min-height: 0; display: flex; margin-top: 3px; }
.info .dock { flex: none; }
.info-main { flex: 1; min-width: 0; display: flex; flex-direction: column; }
.info-view { flex: 1; min-height: 0; overflow: hidden; padding-left: 10px; }
.info .infosbv { margin-bottom: 13px; }
.facts { display: grid; grid-template-columns: 165px 1fr; column-gap: 10px; line-height: 16px; }
.facts dt { background: #c8c8c8; text-align: right; padding-right: 10px; height: 18px; }
.facts .tall { height: 37px; padding-top: 1px; }
.facts .tall + dd { padding-top: 1px; }
.framebar { display: flex; height: 33px; }
.framebar span { width: 125px; background: #c8c8c8; text-align: right; padding: 7px 10px 0 0; }
.framebar i { width: 40px; height: 18px; margin-top: 7px; background: linear-gradient(#0000ff 1px, #000 1px 10px, #eee 10px); }
.info h3 { display: flex; gap: 27px; height: 22px; padding: 6px 0 0 15px; background: #868686; color: #fff; font: bold 12px/16px "Noto Sans", sans-serif; }
.info h3 strong { font-size: 14px; }
.previews { display: flex; gap: 8px; height: 117px; padding: 1px 4px; background: #ddd; margin-bottom: 10px; font-size: 11px; }
.previews a { display: flex; flex-direction: column; align-items: center; line-height: 18px; }
.info .stat { height: 23px; border-bottom: 1px solid #666; }
.chart { height: 166px; background: #fff; overflow: hidden; }
.chart svg { display: block; }
.chart text { font: 11px "Liberation Sans", sans-serif; text-anchor: end; }
.y1 text { fill: #00d800; }
.y2 text { fill: #d86a14; }
.chart .xt text { font-size: 12px; text-anchor: start; }

/* hand-drawn marks over the panels */
.ink { position: absolute; left: 490px; top: 480px; pointer-events: none; fill: none; stroke: #f01010; stroke-width: 2; }
```
